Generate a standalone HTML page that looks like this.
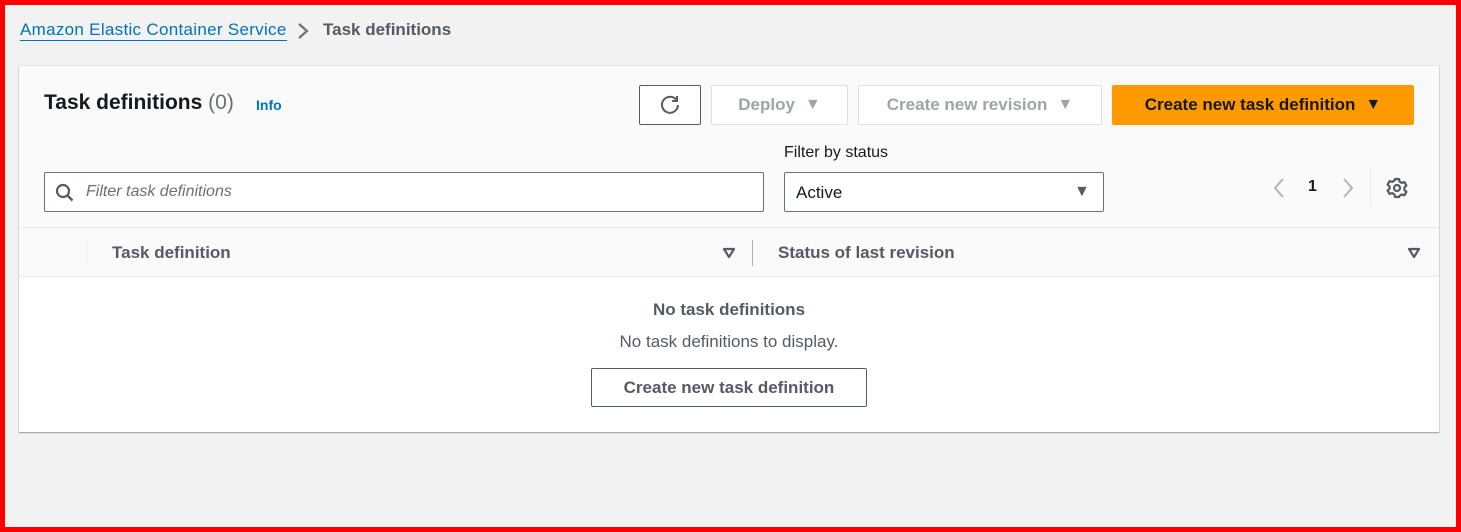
<!DOCTYPE html>
<html><head><style>
*{box-sizing:border-box;margin:0;padding:0}
body{width:1461px;height:532px;background:#f2f2f2;font-family:"Liberation Sans",sans-serif;position:relative;overflow:hidden}
.frame{position:absolute;left:0;top:0;width:1461px;height:532px;border:5px solid #f00;pointer-events:none;z-index:9}
.abs{position:absolute}
.card{position:absolute;left:19px;top:66px;width:1420px;height:366px;background:#fafafa;box-shadow:0 1px 1px rgba(0,28,36,.35),0 0 0 1px #e5e5e5}
.btn{position:absolute;height:40px;border:1px solid #e0e0e0;background:#fff;border-radius:2px;font-weight:bold;font-size:17px;color:#9ba7a7;display:flex;align-items:center;justify-content:center}
.car{font-size:16px;margin-left:10px}
</style></head><body>
<div class="frame"></div>
<div class="abs" style="left:20px;top:20px;font-size:17px;color:#0073bb;border-bottom:1px solid #0073bb;line-height:20px;letter-spacing:.3px">Amazon Elastic Container Service</div>
<svg class="abs" style="left:296px;top:22px" width="14" height="18"><path d="M3 2l8 7-8 7" stroke="#687078" stroke-width="2.2" fill="none"/></svg>
<div class="abs" style="left:323px;top:20px;font-size:17px;font-weight:bold;color:#545b64;line-height:20px">Task definitions</div>
<div class="card">
 <div class="abs" style="left:25px;top:25px;font-size:21px;font-weight:bold;color:#16191f">Task definitions <span style="font-weight:normal;color:#687078">(0)</span></div>
 <div class="abs" style="left:237px;top:31px;font-size:14px;font-weight:bold;color:#0073bb">Info</div>
 <div class="btn" style="left:620px;top:19px;width:62px;border-color:#545b64">
  <svg width="22" height="22" viewBox="0 0 22 22"><path d="M17 5.5A8 8 0 1 0 19 11" stroke="#545b64" stroke-width="2" fill="none"/><path d="M18 2v5h-5" stroke="#545b64" stroke-width="2" fill="none"/></svg></div>
 <div class="btn" style="left:692px;top:19px;width:137px">Deploy<span class="car">▼</span></div>
 <div class="btn" style="left:839px;top:19px;width:244px">Create new revision<span class="car">▼</span></div>
 <div class="btn" style="left:1093px;top:19px;width:302px;background:#ff9900;border-color:#ff9900;color:#16191f">Create new task definition<span class="car">▼</span></div>
 <div class="abs" style="left:765px;top:78px;font-size:16px;color:#16191f">Filter by status</div>
 <div class="abs" style="left:25px;top:106px;width:720px;height:40px;background:#fff;border:1px solid #687078;border-radius:2px">
  <svg class="abs" style="left:10px;top:10px" width="20" height="20"><circle cx="8" cy="8" r="6" stroke="#545b64" stroke-width="2.2" fill="none"/><path d="M12.5 12.5l5 5" stroke="#545b64" stroke-width="2.4"/></svg>
  <div class="abs" style="left:41px;top:10px;font-size:16px;font-style:italic;color:#687078">Filter task definitions</div></div>
 <div class="abs" style="left:765px;top:106px;width:320px;height:40px;background:#fff;border:1px solid #687078;border-radius:2px">
  <div class="abs" style="left:11px;top:10px;font-size:17px;color:#16191f">Active</div>
  <div class="abs" style="left:289px;top:10px;font-size:16px;color:#545b64">▼</div></div>
 <svg class="abs" style="left:1253px;top:111px" width="14" height="22"><path d="M11 2L3 11l8 9" stroke="#aab7b8" stroke-width="2" fill="none"/></svg>
 <div class="abs" style="left:1289px;top:112px;font-size:16px;font-weight:bold;color:#16191f">1</div>
 <svg class="abs" style="left:1322px;top:111px" width="14" height="22"><path d="M3 2l8 9-8 9" stroke="#aab7b8" stroke-width="2" fill="none"/></svg>
 <div class="abs" style="left:1351px;top:101px;width:1px;height:40px;background:#eaeded"></div>
 <svg class="abs" style="left:1367px;top:111px" width="22" height="22" viewBox="0 0 22 22"><path d="M9 2h4l.6 2.6 2.2 1.3 2.6-.8 2 3.5-2 1.8v2.6l2 1.8-2 3.5-2.6-.8-2.2 1.3L13 20H9l-.6-2.6-2.2-1.3-2.6.8-2-3.5 2-1.8V9.4l-2-1.8 2-3.5 2.6.8 2.2-1.3z" stroke="#545b64" stroke-width="2.2" fill="none" stroke-linejoin="round"/><circle cx="11" cy="11" r="3" stroke="#545b64" stroke-width="2.2" fill="none"/></svg>
 <div class="abs" style="left:0;top:161px;width:1420px;height:1px;background:#eaeded"></div>
 <div class="abs" style="left:67px;top:175px;width:1px;height:24px;background:#eaeded"></div>
 <div class="abs" style="left:93px;top:177px;font-size:17px;font-weight:bold;color:#545b64">Task definition</div>
 <svg class="abs" style="left:703px;top:181px" width="14" height="12"><path d="M2 2h10l-5 8z" stroke="#545b64" stroke-width="2.2" fill="none" stroke-linejoin="round"/></svg>
 <div class="abs" style="left:733px;top:174px;width:1px;height:26px;background:#aab7b8"></div>
 <div class="abs" style="left:759px;top:177px;font-size:17px;font-weight:bold;color:#545b64">Status of last revision</div>
 <svg class="abs" style="left:1388px;top:181px" width="14" height="12"><path d="M2 2h10l-5 8z" stroke="#545b64" stroke-width="2.2" fill="none" stroke-linejoin="round"/></svg>
 <div class="abs" style="left:0;top:210px;width:1420px;height:156px;background:#fff;border-top:1px solid #eaeded">
  <div class="abs" style="left:0;width:1420px;top:23px;text-align:center;font-size:17px;font-weight:bold;color:#545b64">No task definitions</div>
  <div class="abs" style="left:0;width:1420px;top:55px;text-align:center;font-size:17px;color:#545b64">No task definitions to display.</div>
  <div class="abs" style="left:572px;top:91px;width:276px;height:39px;border:1px solid #545b64;border-radius:2px;text-align:center;line-height:37px;font-size:17px;font-weight:bold;color:#545b64">Create new task definition</div>
 </div>
</div>
</body></html>
